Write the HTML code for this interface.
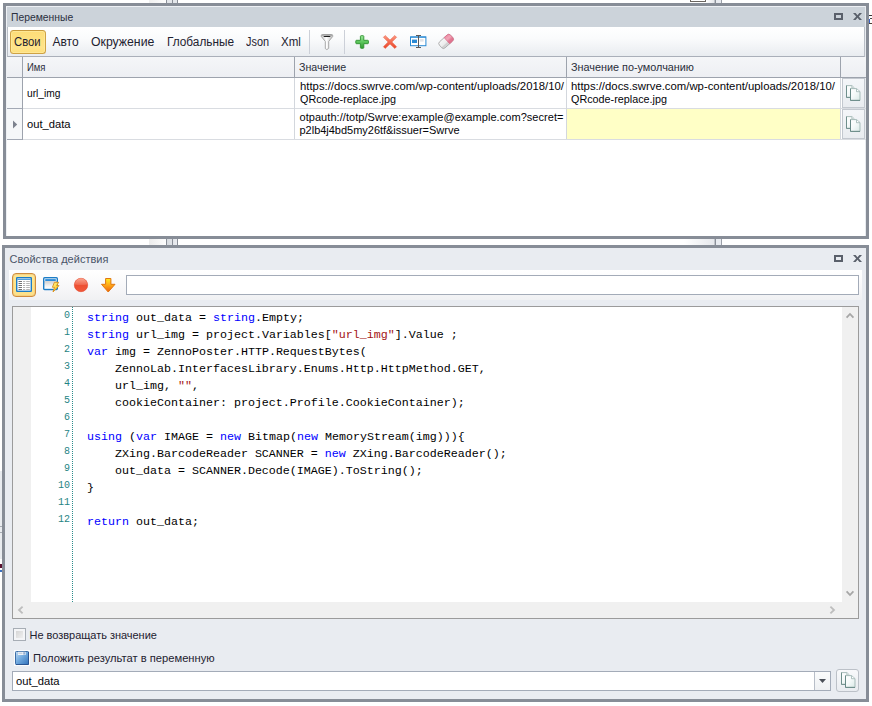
<!DOCTYPE html>
<html>
<head>
<meta charset="utf-8">
<title>Variables</title>
<style>
html,body{margin:0;padding:0;}
body{width:872px;height:706px;background:#fff;overflow:hidden;position:relative;font-family:"Liberation Sans",sans-serif;font-size:11px;color:#1c1c1c;}
.abs{position:absolute;}
.t{position:absolute;white-space:nowrap;line-height:1;}
.panel{position:absolute;box-sizing:border-box;border:3px solid #878d97;}
.vline{position:absolute;width:1px;}
.hline{position:absolute;height:1px;}
svg{position:absolute;overflow:visible;}
.code{font-family:"Liberation Mono",monospace;font-size:11.67px;color:#000;white-space:pre;position:absolute;left:87px;line-height:17px;height:17px;}
.kw{color:#0000ff;}
.str{color:#a31515;}
.ln{font-family:"Liberation Mono",monospace;font-size:10px;color:#1f8484;position:absolute;width:40px;left:30px;text-align:right;line-height:12px;height:12px;}
.cpbtn{position:absolute;box-sizing:border-box;border:1px solid #c3c8cf;background:linear-gradient(#f4f6f9,#e9ecf0);}
</style>
</head>
<body>

<!-- stray fragments above / between panels -->
<div class="abs" style="left:149px;top:0;width:17px;height:3px;background:linear-gradient(90deg,#f0f0f0,#fdfdfd);"></div>
<div class="abs" style="left:166px;top:0;width:12px;height:3px;background:#e3e6ea;"></div>
<div class="vline" style="left:166px;top:0;height:3px;background:#8a8f98;"></div>
<div class="vline" style="left:172px;top:0;height:3px;background:#8a8f98;"></div>
<div class="vline" style="left:177px;top:0;height:3px;background:#8a8f98;"></div>
<div class="abs" style="left:690px;top:0;width:16px;height:2px;box-sizing:border-box;border:1px solid #6a6560;border-top:none;background:#fff;"></div>
<div class="abs" style="left:706px;top:0;width:8px;height:3px;background:linear-gradient(90deg,#fff,#e6e8ec);"></div>
<div class="abs" style="left:714px;top:0;width:8px;height:3px;background:#e8ebf0;"></div>
<div class="vline" style="left:714px;top:0;height:3px;background:#c0c4ca;"></div>
<div class="vline" style="left:715px;top:0;height:3px;background:#8a8f98;"></div>
<div class="vline" style="left:721px;top:0;height:3px;background:#9a9fa8;"></div>

<div class="abs" style="left:149px;top:239px;width:17px;height:6px;background:linear-gradient(90deg,#ececec,#fdfdfd);"></div>
<div class="abs" style="left:166px;top:239px;width:12px;height:6px;background:linear-gradient(90deg,#d5d9de,#eceef2);"></div>
<div class="vline" style="left:166px;top:239px;height:6px;background:#8a8f98;"></div>
<div class="vline" style="left:172px;top:239px;height:6px;background:#8a8f98;"></div>
<div class="vline" style="left:177px;top:239px;height:6px;background:#8a8f98;"></div>
<div class="abs" style="left:684px;top:239px;width:30px;height:6px;background:linear-gradient(90deg,#fff,#e6e8ec);"></div>
<div class="abs" style="left:714px;top:239px;width:8px;height:6px;background:#e8ebf0;"></div>
<div class="vline" style="left:714px;top:239px;height:6px;background:#c0c4ca;"></div>
<div class="vline" style="left:715px;top:239px;height:6px;background:#8a8f98;"></div>
<div class="vline" style="left:721px;top:239px;height:6px;background:#9a9fa8;"></div>

<!-- left edge sliver -->
<div class="abs" style="left:0;top:471px;width:2px;height:88px;background:#e9ecf0;"></div>
<div class="hline" style="left:0;top:526px;width:2px;background:#a8adb5;"></div>
<div class="hline" style="left:0;top:532px;width:2px;background:#a8adb5;"></div>
<div class="abs" style="left:0;top:564px;width:2px;height:4px;background:#5a1030;"></div>
<div class="abs" style="left:0;top:570px;width:2px;height:2px;background:#3a70c0;"></div>
<!-- right edge sliver -->
<div class="hline" style="left:869px;top:15px;width:3px;background:#3a3436;"></div>
<div class="hline" style="left:870px;top:18px;width:2px;background:#4a4448;"></div>
<div class="vline" style="left:869px;top:19px;height:4px;background:#3a62c8;"></div>
<div class="hline" style="left:869px;top:23px;width:3px;background:#4a3c30;"></div>

<!-- ================= PANEL 1 ================= -->
<div class="panel" style="left:3px;top:3px;width:866px;height:236px;background:#fff;"></div>
<div class="abs" style="left:6px;top:6px;width:860px;height:21px;background:#ccd3da;box-sizing:border-box;border-top:1px solid #eef1f5;border-left:1px solid #eef1f5;"></div>
<div class="vline" style="left:6px;top:27px;height:209px;background:#eceff3;"></div>
<div class="vline" style="left:865px;top:6px;height:230px;background:#e8ebef;"></div>
<!-- title icons -->
<div class="abs" style="left:834px;top:13px;width:9px;height:7px;box-sizing:border-box;border:2px solid #5a606b;"></div>
<svg style="left:853px;top:13px;" width="9" height="7" viewBox="0 0 9 7"><path d="M0 0H2.6L4.5 2.2 6.4 0H9L5.8 3.5 9 7H6.4L4.5 4.8 2.6 7H0L3.2 3.5Z" fill="#5a606b"/></svg>
<!-- toolbar -->
<div class="abs" style="left:7px;top:27px;width:858px;height:30px;box-sizing:border-box;background:linear-gradient(#ffffff,#fafbfc 40%,#e9ecf0);border-left:1px solid #b9bec6;border-right:1px solid #b9bec6;border-bottom:1px solid #aaafb9;"></div>
<div class="abs" style="left:10px;top:30px;width:36px;height:24px;box-sizing:border-box;border:1px solid #cfa244;border-top-color:#c89a3c;border-radius:3.5px;background:linear-gradient(#fddd78,#fee283 50%,#ffe48a 75%,#fedf7c);box-shadow:inset 0 0 0 1px rgba(255,238,170,.55);"></div>
<div class="vline" style="left:309px;top:30px;height:24px;background:#ccd0d8;"></div>
<div class="vline" style="left:344px;top:30px;height:24px;background:#ccd0d8;"></div>
<svg style="left:320px;top:33px;" width="14" height="18" viewBox="0 0 14 18">
 <defs>
  <linearGradient id="fg" x1="0" x2="1" y1="0" y2="0"><stop offset="0" stop-color="#c9c9c9"/><stop offset=".45" stop-color="#ffffff"/><stop offset="1" stop-color="#bdbdbd"/></linearGradient>
 </defs>
 <path d="M1.3 2.6Q1.3 1.5 2.5 1.5H11.5Q12.7 1.5 12.7 2.6V3.5L8.7 8.4V15.3L6.9 16.6 5.3 15.6V8.4L1.3 3.5Z" fill="url(#fg)" stroke="#a0a0a0" stroke-width="0.9"/>
 <ellipse cx="7" cy="3.4" rx="3.6" ry="0.7" fill="#1a1a1a"/>
 <path d="M1.8 2.2H12.2" stroke="#8f8f8f" stroke-width="0.8" fill="none"/>
</svg>
<svg style="left:355px;top:35px;" width="14" height="14" viewBox="0 0 14 14">
 <defs><linearGradient id="pg" x1="0" x2="0" y1="0" y2="1"><stop offset="0" stop-color="#9be89b"/><stop offset=".5" stop-color="#5cc65c"/><stop offset="1" stop-color="#2f9a2f"/></linearGradient></defs>
 <path d="M6.1 0.7H8.1Q8.8 0.7 8.8 1.4V5.3H12.7Q13.4 5.3 13.4 6V8Q13.4 8.7 12.7 8.7H8.8V12.6Q8.8 13.3 8.1 13.3H6.1Q5.4 13.3 5.4 12.6V8.7H1.5Q0.8 8.7 0.8 8V6Q0.8 5.3 1.5 5.3H5.4V1.4Q5.4 0.7 6.1 0.7Z" fill="url(#pg)" stroke="#2f922f" stroke-width="0.9"/>
</svg>
<svg style="left:383px;top:35px;" width="14" height="14" viewBox="0 0 14 14">
 <defs><linearGradient id="xg" x1="0" x2="0" y1="0" y2="1"><stop offset="0" stop-color="#fa9a84"/><stop offset=".5" stop-color="#f46a50"/><stop offset="1" stop-color="#e8482a"/></linearGradient></defs>
 <path d="M2.2 0.5L7 5.1 11.8 0.5 13.6 2.3 8.9 7 13.6 11.7 11.8 13.5 7 8.9 2.2 13.5 0.4 11.7 5.1 7 0.4 2.3Z" fill="url(#xg)" stroke="#e8563a" stroke-width="0.5"/>
</svg>
<!-- rename -->
<svg style="left:410px;top:35px;" width="17" height="13" viewBox="0 0 17 13">
 <rect x="0.5" y="1.9" width="15.4" height="8.8" fill="#fff" stroke="#2a8ad4" stroke-width="1"/>
 <rect x="0.5" y="1.6" width="15.4" height="1.1" fill="#2a8ad4"/>
 <rect x="2" y="4.6" width="5" height="3.4" fill="#2a8ad4"/>
 <rect x="9.8" y="4" width="3.8" height="2.6" fill="#e2e4e8"/>
 <path d="M6 0.5H11M6 12.5H11M8.5 0.5V12.5" stroke="#5c5858" stroke-width="1" fill="none"/>
</svg>
<!-- eraser -->
<svg style="left:437px;top:33px;" width="18" height="17" viewBox="0 0 18 17">
 <defs>
  <linearGradient id="eg" x1="0" x2="0" y1="0" y2="1"><stop offset="0" stop-color="#f6f6f6"/><stop offset=".6" stop-color="#ececec"/><stop offset=".75" stop-color="#cfcfcf"/><stop offset="1" stop-color="#d8d8d8"/></linearGradient>
  <linearGradient id="ep" x1="0" x2="0" y1="0" y2="1"><stop offset="0" stop-color="#ec8ea6"/><stop offset=".4" stop-color="#f2a6b8"/><stop offset=".7" stop-color="#e27a94"/><stop offset="1" stop-color="#de6e8a"/></linearGradient>
 </defs>
 <g transform="rotate(-42 9.1 8.4)">
  <rect x="1.6" y="4.3" width="15" height="8.2" rx="2.5" fill="url(#eg)" stroke="#a4a4a4" stroke-width="0.8"/>
  <path d="M10.2 4.3H14.1Q16.6 4.3 16.6 6.8V10Q16.6 12.5 14.1 12.5H10.2Z" fill="url(#ep)" stroke="#dc6c88" stroke-width="0.7"/>
 </g>
</svg>
<!-- grid -->
<div class="abs" style="left:7px;top:57px;width:859px;height:20px;background:linear-gradient(#f5f6f8,#edeff3);"></div>
<div class="hline" style="left:7px;top:77px;width:859px;background:#9da3ad;"></div>
<div class="abs" style="left:7px;top:78px;width:15px;height:61px;background:#f5f7f9;"></div>
<div class="abs" style="left:567px;top:109px;width:273px;height:30px;background:#ffffc6;"></div>
<div class="hline" style="left:7px;top:108px;width:859px;background:#d9dce1;"></div>
<div class="hline" style="left:7px;top:108px;width:15px;background:#a3a9b5;"></div>
<div class="hline" style="left:7px;top:139px;width:859px;background:#d9dce1;"></div>
<div class="hline" style="left:7px;top:139px;width:15px;background:#a3a9b5;"></div>
<div class="vline" style="left:22px;top:57px;height:83px;background:#9da3ad;"></div>
<div class="vline" style="left:294px;top:57px;height:21px;background:#9da3ad;"></div>
<div class="vline" style="left:566px;top:57px;height:21px;background:#9da3ad;"></div>
<div class="vline" style="left:840px;top:57px;height:21px;background:#9da3ad;"></div>
<div class="vline" style="left:294px;top:78px;height:61px;background:#d3d7dd;"></div>
<div class="vline" style="left:566px;top:78px;height:61px;background:#d3d7dd;"></div>
<div class="vline" style="left:840px;top:78px;height:61px;background:#d3d7dd;"></div>
<!-- row indicator -->
<svg style="left:13px;top:120px;" width="5" height="9" viewBox="0 0 5 9"><path d="M0 0.5L4.2 4.5 0 8.5Z" fill="#7c828e"/></svg>
<!-- copy buttons -->
<div class="cpbtn" style="left:842px;top:78px;width:23px;height:30px;"></div>
<div class="cpbtn" style="left:842px;top:109px;width:23px;height:30px;"></div>
<svg style="left:846px;top:85px;" width="15" height="16" viewBox="0 0 15 16">
 <defs><linearGradient id="cg1" x1="0" x2="1" y1="0" y2="1"><stop offset="0" stop-color="#ffffff"/><stop offset=".45" stop-color="#f6fafa"/><stop offset="1" stop-color="#d9e9e6"/></linearGradient></defs>
 <path d="M0.5 0.6H5.9L8.4 3V12.4H0.5Z" fill="url(#cg1)" stroke="#9fb6b3" stroke-width="0.9"/>
 <path d="M0.5 0.6V12.4H8.4" fill="none" stroke="#6f8f8c" stroke-width="1"/>
 <path d="M5.9 0.8V3H8.2" fill="#fff" stroke="#8fa9a6" stroke-width="0.7"/>
 <path d="M4.5 3.6H10.6L14 6.6V15.4H4.5Z" fill="url(#cg1)" stroke="#9fb6b3" stroke-width="0.9"/>
 <path d="M4.5 3.6V15.4H14" fill="none" stroke="#688986" stroke-width="1"/>
 <path d="M10.5 3.9V6.7H13.8" fill="#fff" stroke="#8fa9a6" stroke-width="0.7"/>
</svg>
<svg style="left:846px;top:116px;" width="15" height="16" viewBox="0 0 15 16">
 <defs><linearGradient id="cg2" x1="0" x2="1" y1="0" y2="1"><stop offset="0" stop-color="#ffffff"/><stop offset=".45" stop-color="#f6fafa"/><stop offset="1" stop-color="#d9e9e6"/></linearGradient></defs>
 <path d="M0.5 0.6H5.9L8.4 3V12.4H0.5Z" fill="url(#cg2)" stroke="#9fb6b3" stroke-width="0.9"/>
 <path d="M0.5 0.6V12.4H8.4" fill="none" stroke="#6f8f8c" stroke-width="1"/>
 <path d="M5.9 0.8V3H8.2" fill="#fff" stroke="#8fa9a6" stroke-width="0.7"/>
 <path d="M4.5 3.6H10.6L14 6.6V15.4H4.5Z" fill="url(#cg2)" stroke="#9fb6b3" stroke-width="0.9"/>
 <path d="M4.5 3.6V15.4H14" fill="none" stroke="#688986" stroke-width="1"/>
 <path d="M10.5 3.9V6.7H13.8" fill="#fff" stroke="#8fa9a6" stroke-width="0.7"/>
</svg>


<!-- ================= PANEL 2 ================= -->
<div class="panel" style="left:2px;top:245px;width:867px;height:457px;background:#e9ecf1;"></div>
<div class="abs" style="left:834px;top:255px;width:9px;height:7px;box-sizing:border-box;border:2px solid #5a606b;"></div>
<svg style="left:853px;top:255px;" width="9" height="7" viewBox="0 0 9 7"><path d="M0 0H2.6L4.5 2.2 6.4 0H9L5.8 3.5 9 7H6.4L4.5 4.8 2.6 7H0L3.2 3.5Z" fill="#5a606b"/></svg>
<!-- toolbar -->
<div class="abs" style="left:9px;top:270px;width:853px;height:30px;background:linear-gradient(#ffffff,#fafafb 40%,#f0f1f3);"></div>
<div class="abs" style="left:12px;top:273px;width:24px;height:24px;box-sizing:border-box;border:1px solid #cf8c3e;border-radius:4px;background:linear-gradient(#fde796,#fde38a 50%,#fde08a);box-shadow:inset 0 0 0 1px rgba(240,190,110,.45);"></div>
<!-- table icon -->
<svg style="left:16px;top:277px;" width="16" height="15" viewBox="0 0 16 15">
 <rect x="0" y="0" width="16" height="15" rx="1.3" fill="#1c7cc6"/>
 <rect x="1.4" y="1.4" width="13.2" height="12.2" fill="#fff"/>
 <rect x="1.4" y="1.9" width="13.2" height="1" fill="#3e96da"/>
 <g fill="#747474">
  <rect x="2.5" y="4" width="3.5" height="1"/><rect x="2.5" y="6" width="3.5" height="1"/><rect x="2.5" y="8" width="3.5" height="1"/><rect x="2.5" y="10" width="3.5" height="1"/><rect x="2.5" y="12" width="3.5" height="1"/>
 </g>
 <g fill="#b4b4b4">
  <rect x="7" y="4" width="2.2" height="1"/><rect x="7" y="6" width="2.2" height="1"/><rect x="7" y="8" width="2.2" height="1"/><rect x="7" y="10" width="2.2" height="1"/><rect x="7" y="12" width="2.2" height="1"/>
  <rect x="10.2" y="4" width="3.6" height="1"/><rect x="10.2" y="6" width="3.6" height="1"/><rect x="10.2" y="8" width="3.6" height="1"/><rect x="10.2" y="10" width="3.6" height="1"/><rect x="10.2" y="12" width="3.6" height="1"/>
 </g>
</svg>
<!-- window + bolt -->
<svg style="left:43px;top:277px;" width="17" height="16" viewBox="0 0 17 16">
 <defs>
  <linearGradient id="wg" x1="0" x2="0" y1="0" y2="1"><stop offset="0" stop-color="#ffffff"/><stop offset=".28" stop-color="#ffffff"/><stop offset=".3" stop-color="#d2d2d2"/><stop offset=".7" stop-color="#f2f2f2"/><stop offset="1" stop-color="#ffffff"/></linearGradient>
  <linearGradient id="bg" x1="0" x2="1" y1="0" y2="1"><stop offset="0" stop-color="#fff6a8"/><stop offset=".55" stop-color="#ffd83a"/><stop offset="1" stop-color="#f4a414"/></linearGradient>
 </defs>
 <rect x="0" y="0" width="15" height="13.2" rx="1.6" fill="#1c7cc6"/>
 <rect x="1.4" y="1.4" width="12.2" height="10.4" fill="url(#wg)"/>
 <rect x="2.2" y="2.1" width="10.6" height="1.9" fill="#2c8cda"/>
 <path d="M11.4 5.3H15.7L13.6 8.6H16L10 15 11.5 10.3H9.4Z" fill="url(#bg)" stroke="#d88e1c" stroke-width="0.9" stroke-linejoin="round"/>
</svg>
<!-- red ball -->
<svg style="left:74px;top:278px;" width="14" height="14" viewBox="0 0 14 14">
 <defs>
  <linearGradient id="rg1" x1="0" x2="0" y1="0" y2="1"><stop offset="0" stop-color="#f9a48e"/><stop offset="1" stop-color="#f0644a"/></linearGradient>
  <linearGradient id="rg2" x1="0" x2="0" y1="0" y2="1"><stop offset="0" stop-color="#ea4428"/><stop offset="1" stop-color="#f0583a"/></linearGradient>
 </defs>
 <circle cx="7" cy="7" r="6.7" fill="url(#rg2)" stroke="#e4442a" stroke-width="0.6"/>
 <path d="M0.7 6.6A6.3 6.3 0 0 1 13.3 6.6Q7 7.6 0.7 6.6Z" fill="url(#rg1)"/>
</svg>
<!-- arrow down -->
<svg style="left:101px;top:278px;" width="15" height="15" viewBox="0 0 15 15">
 <defs><linearGradient id="ag" x1="0" x2="0" y1="0" y2="1"><stop offset="0" stop-color="#ffec24"/><stop offset=".45" stop-color="#ffae18"/><stop offset="1" stop-color="#f0600c"/></linearGradient></defs>
 <path d="M4.6 0.5H9.9V6.3H14L7.2 14 0.5 6.3H4.6Z" fill="url(#ag)" stroke="#e07610" stroke-width="1" stroke-linejoin="round"/>
</svg>

<div class="abs" style="left:126px;top:275px;width:733px;height:20px;box-sizing:border-box;border:1px solid #a3abb8;background:#fff;"></div>
<!-- editor -->
<div class="abs" style="left:12px;top:306px;width:847px;height:313px;box-sizing:border-box;border:1px solid #9b9b9b;background:#fff;"></div>
<div class="abs" style="left:13px;top:307px;width:18px;height:295px;background:#f0f0f0;"></div>
<div class="abs" style="left:842px;top:307px;width:16px;height:311px;background:#f0f0f0;"></div>
<div class="abs" style="left:13px;top:602px;width:845px;height:16px;background:#f0f0f0;"></div>
<div class="abs" style="left:72px;top:307px;width:1px;height:295px;background:repeating-linear-gradient(#2b8c8c 0 1px,#fff 1px 2px);"></div>
<!-- scroll arrows -->
<svg style="left:846px;top:312px;" width="8" height="7" viewBox="0 0 8 7"><path d="M0.6 5.6L4 2 7.4 5.6" fill="none" stroke="#a6a6a6" stroke-width="1.8"/></svg>
<svg style="left:846px;top:590px;" width="8" height="7" viewBox="0 0 8 7"><path d="M0.6 1.4L4 5 7.4 1.4" fill="none" stroke="#a6a6a6" stroke-width="1.8"/></svg>
<svg style="left:17px;top:606px;" width="7" height="8" viewBox="0 0 7 8"><path d="M5.6 0.6L2 4 5.6 7.4" fill="none" stroke="#bdbdbd" stroke-width="1.8"/></svg>
<svg style="left:829px;top:606px;" width="7" height="8" viewBox="0 0 7 8"><path d="M1.4 0.6L5 4 1.4 7.4" fill="none" stroke="#bdbdbd" stroke-width="1.8"/></svg>
<div class="ln" style="top:309.70px">0</div>
<div class="code" style="top:310.39px"><span class="kw">string</span> out_data = <span class="kw">string</span>.Empty;</div>
<div class="ln" style="top:326.70px">1</div>
<div class="code" style="top:327.39px"><span class="kw">string</span> url_img = project.Variables[<span class="str">&quot;url_img&quot;</span>].Value ;</div>
<div class="ln" style="top:343.70px">2</div>
<div class="code" style="top:344.39px"><span class="kw">var</span> img = ZennoPoster.HTTP.RequestBytes(</div>
<div class="ln" style="top:360.70px">3</div>
<div class="code" style="top:361.39px">    ZennoLab.InterfacesLibrary.Enums.Http.HttpMethod.GET,</div>
<div class="ln" style="top:377.70px">4</div>
<div class="code" style="top:378.39px">    url_img, <span class="str">&quot;&quot;</span>,</div>
<div class="ln" style="top:394.70px">5</div>
<div class="code" style="top:395.39px">    cookieContainer: project.Profile.CookieContainer);</div>
<div class="ln" style="top:411.70px">6</div>
<div class="ln" style="top:428.70px">7</div>
<div class="code" style="top:429.39px"><span class="kw">using</span> (<span class="kw">var</span> IMAGE = <span class="kw">new</span> Bitmap(<span class="kw">new</span> MemoryStream(img))){</div>
<div class="ln" style="top:445.70px">8</div>
<div class="code" style="top:446.39px">    ZXing.BarcodeReader SCANNER = <span class="kw">new</span> ZXing.BarcodeReader();</div>
<div class="ln" style="top:462.70px">9</div>
<div class="code" style="top:463.39px">    out_data = SCANNER.Decode(IMAGE).ToString();</div>
<div class="ln" style="top:479.70px">10</div>
<div class="code" style="top:480.39px">}</div>
<div class="ln" style="top:496.70px">11</div>
<div class="ln" style="top:513.70px">12</div>
<div class="code" style="top:514.39px"><span class="kw">return</span> out_data;</div>
<!-- checkbox -->
<div class="abs" style="left:13px;top:628px;width:13px;height:13px;box-sizing:border-box;border:1px solid #a7adb5;background:#f4f5f7;"></div>
<div class="abs" style="left:16px;top:631px;width:7px;height:7px;background:linear-gradient(135deg,#d6d6d6,#efefef);"></div>
<!-- save icon -->
<div class="abs" style="left:14px;top:650px;width:16px;height:16px;background:#fbfcfd;"></div>
<svg style="left:15px;top:651px;" width="14" height="14" viewBox="0 0 14 14">
 <defs><linearGradient id="sg" x1="0" x2="1" y1="0" y2="1"><stop offset="0" stop-color="#c4dcf2"/><stop offset=".45" stop-color="#74ace0"/><stop offset="1" stop-color="#3272ba"/></linearGradient></defs>
 <rect x="0.5" y="0.5" width="13" height="13" rx="0.8" fill="url(#sg)" stroke="#3c6ea8" stroke-width="1"/>
 <path d="M13.5 1V13.5H1" fill="none" stroke="#2a5592" stroke-width="1"/>
 <rect x="3" y="0.8" width="7.6" height="3.2" fill="#eef3f9"/>
 <rect x="3.4" y="1.6" width="4" height="1.4" fill="#c8d4e2"/>
 <rect x="8.4" y="1.2" width="1.4" height="2.4" fill="#7a9cc8"/>
</svg>
<!-- combo -->
<div class="abs" style="left:12px;top:671px;width:819px;height:20px;box-sizing:border-box;border:1px solid #a3abb8;background:#fff;"></div>
<div class="abs" style="left:814px;top:672px;width:16px;height:18px;box-sizing:border-box;border-left:1px solid #b8bec8;background:linear-gradient(#fafbfc,#eef0f3);"></div>
<svg style="left:819px;top:679px;" width="7" height="4" viewBox="0 0 7 4"><path d="M0 0H7L3.5 4Z" fill="#4a4f58"/></svg>
<div class="abs" style="left:836px;top:669px;width:23px;height:23px;box-sizing:border-box;border:1px solid #bcc1c8;border-radius:3px;background:linear-gradient(#f8f9fb,#e9ecf0);"></div>
<svg style="left:841px;top:672px;" width="15" height="16" viewBox="0 0 15 16">
 <defs><linearGradient id="cg3" x1="0" x2="1" y1="0" y2="1"><stop offset="0" stop-color="#ffffff"/><stop offset=".45" stop-color="#f6fafa"/><stop offset="1" stop-color="#d9e9e6"/></linearGradient></defs>
 <path d="M0.5 0.6H5.9L8.4 3V12.4H0.5Z" fill="url(#cg3)" stroke="#9fb6b3" stroke-width="0.9"/>
 <path d="M0.5 0.6V12.4H8.4" fill="none" stroke="#6f8f8c" stroke-width="1"/>
 <path d="M5.9 0.8V3H8.2" fill="#fff" stroke="#8fa9a6" stroke-width="0.7"/>
 <path d="M4.5 3.6H10.6L14 6.6V15.4H4.5Z" fill="url(#cg3)" stroke="#9fb6b3" stroke-width="0.9"/>
 <path d="M4.5 3.6V15.4H14" fill="none" stroke="#688986" stroke-width="1"/>
 <path d="M10.5 3.9V6.7H13.8" fill="#fff" stroke="#8fa9a6" stroke-width="0.7"/>
</svg>


<div class="t" style="left:10.7px;top:11.69px;font-size:11px;letter-spacing:0.000px;color:#2b3040;transform:scaleX(0.9406);transform-origin:0 0;">Переменные</div>
<div class="t" style="left:14.4px;top:35.84px;font-size:12px;letter-spacing:0.000px;color:#1e2230;transform:scaleX(0.9400);transform-origin:0 0;">Свои</div>
<div class="t" style="left:52.5px;top:35.84px;font-size:12px;letter-spacing:-0.019px;color:#1e2230;">Авто</div>
<div class="t" style="left:90.8px;top:35.84px;font-size:12px;letter-spacing:0.000px;color:#1e2230;transform:scaleX(1.0215);transform-origin:0 0;">Окружение</div>
<div class="t" style="left:167.4px;top:35.84px;font-size:12px;letter-spacing:0.000px;color:#1e2230;transform:scaleX(0.9839);transform-origin:0 0;">Глобальные</div>
<div class="t" style="left:246.3px;top:35.84px;font-size:12px;letter-spacing:0.000px;color:#1e2230;transform:scaleX(0.9070);transform-origin:0 0;">Json</div>
<div class="t" style="left:280.6px;top:35.84px;font-size:12px;letter-spacing:0.000px;color:#1e2230;transform:scaleX(0.9627);transform-origin:0 0;">Xml</div>
<div class="t" style="left:26.6px;top:61.69px;font-size:11px;letter-spacing:0.000px;color:#2a2e3a;transform:scaleX(0.8630);transform-origin:0 0;">Имя</div>
<div class="t" style="left:299.0px;top:61.69px;font-size:11px;letter-spacing:0.000px;color:#2a2e3a;transform:scaleX(0.9676);transform-origin:0 0;">Значение</div>
<div class="t" style="left:571.0px;top:61.69px;font-size:11px;letter-spacing:0.000px;color:#2a2e3a;transform:scaleX(0.9849);transform-origin:0 0;">Значение по-умолчанию</div>
<div class="t" style="left:26.6px;top:87.69px;font-size:11px;letter-spacing:0.000px;color:#05050a;transform:scaleX(0.9285);transform-origin:0 0;">url_img</div>
<div class="t" style="left:26.6px;top:118.69px;font-size:11px;letter-spacing:0.000px;color:#05050a;transform:scaleX(1.0180);transform-origin:0 0;">out_data</div>
<div class="t" style="left:299.5px;top:80.69px;font-size:11px;letter-spacing:0.000px;color:#05050a;transform:scaleX(1.0304);transform-origin:0 0;">https://docs.swrve.com/wp-content/uploads/2018/10/</div>
<div class="t" style="left:299.5px;top:93.69px;font-size:11px;letter-spacing:0.000px;color:#05050a;transform:scaleX(0.9812);transform-origin:0 0;">QRcode-replace.jpg</div>
<div class="t" style="left:299.5px;top:111.69px;font-size:11px;letter-spacing:0.052px;color:#05050a;">otpauth://totp/Swrve:example@example.com?secret=</div>
<div class="t" style="left:299.5px;top:124.69px;font-size:11px;letter-spacing:-0.018px;color:#05050a;">p2lb4j4bd5my26tf&amp;issuer=Swrve</div>
<div class="t" style="left:571.0px;top:80.69px;font-size:11px;letter-spacing:0.000px;color:#05050a;transform:scaleX(1.0304);transform-origin:0 0;">https://docs.swrve.com/wp-content/uploads/2018/10/</div>
<div class="t" style="left:571.0px;top:93.69px;font-size:11px;letter-spacing:0.000px;color:#05050a;transform:scaleX(0.9812);transform-origin:0 0;">QRcode-replace.jpg</div>
<div class="t" style="left:9.6px;top:253.69px;font-size:11px;letter-spacing:0.023px;color:#4a5468;">Свойства действия</div>
<div class="t" style="left:29.5px;top:629.69px;font-size:11px;letter-spacing:-0.023px;color:#1e2230;">Не возвращать значение</div>
<div class="t" style="left:32.7px;top:652.69px;font-size:11px;letter-spacing:0.000px;color:#1e2230;transform:scaleX(1.0162);transform-origin:0 0;">Положить результат в переменную</div>
<div class="t" style="left:15.7px;top:675.99px;font-size:11px;letter-spacing:0.000px;color:#05050a;transform:scaleX(1.0180);transform-origin:0 0;">out_data</div>
</body>
</html>
